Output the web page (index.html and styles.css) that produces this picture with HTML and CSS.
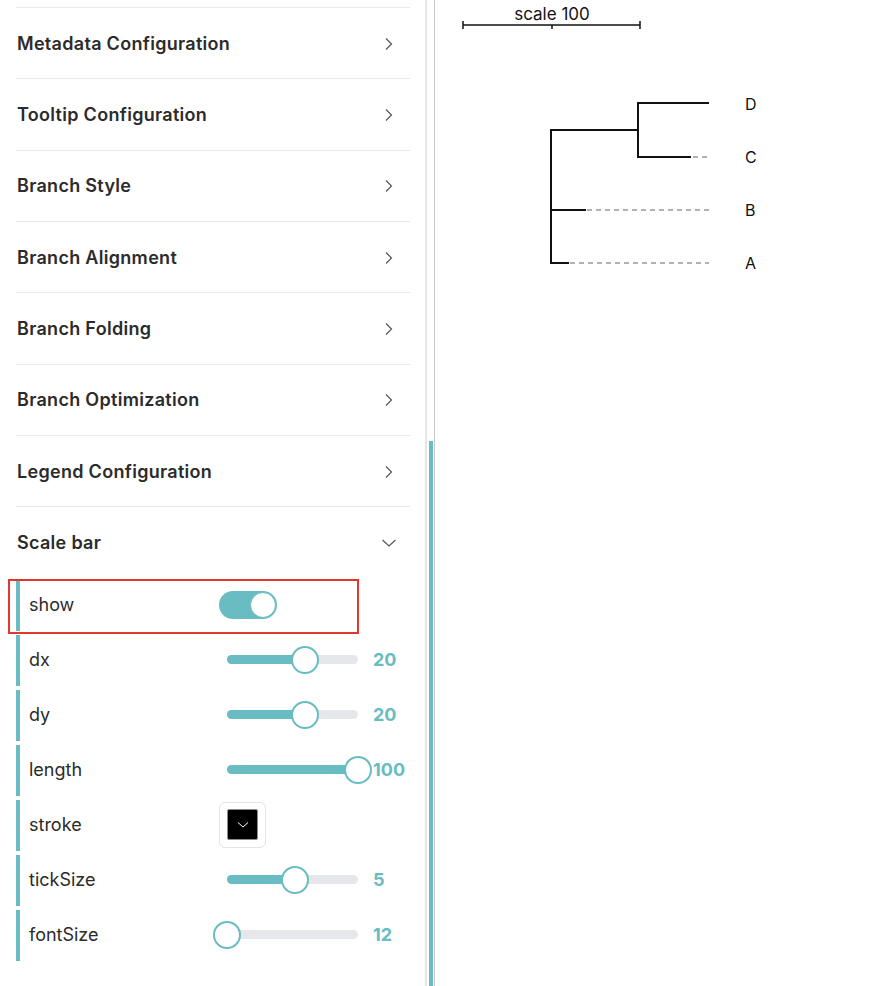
FILE: index.html
```html
<!DOCTYPE html>
<html>
<head>
<meta charset="utf-8">
<link rel="stylesheet" href="styles.css">
</head>
<body>
<div class="layout">
  <aside class="panel">
    <div class="top-sep"></div>
    <div class="section"><span class="title">Metadata Configuration</span><svg class="chev" width="10" height="14" viewBox="0 0 10 14"><path d="M2 1.5 L7.5 7 L2 12.5" fill="none" stroke="#555" stroke-width="1.2"/></svg></div>
    <div class="section"><span class="title">Tooltip Configuration</span><svg class="chev" width="10" height="14" viewBox="0 0 10 14"><path d="M2 1.5 L7.5 7 L2 12.5" fill="none" stroke="#555" stroke-width="1.2"/></svg></div>
    <div class="section"><span class="title">Branch Style</span><svg class="chev" width="10" height="14" viewBox="0 0 10 14"><path d="M2 1.5 L7.5 7 L2 12.5" fill="none" stroke="#555" stroke-width="1.2"/></svg></div>
    <div class="section"><span class="title">Branch Alignment</span><svg class="chev" width="10" height="14" viewBox="0 0 10 14"><path d="M2 1.5 L7.5 7 L2 12.5" fill="none" stroke="#555" stroke-width="1.2"/></svg></div>
    <div class="section"><span class="title">Branch Folding</span><svg class="chev" width="10" height="14" viewBox="0 0 10 14"><path d="M2 1.5 L7.5 7 L2 12.5" fill="none" stroke="#555" stroke-width="1.2"/></svg></div>
    <div class="section"><span class="title">Branch Optimization</span><svg class="chev" width="10" height="14" viewBox="0 0 10 14"><path d="M2 1.5 L7.5 7 L2 12.5" fill="none" stroke="#555" stroke-width="1.2"/></svg></div>
    <div class="section"><span class="title">Legend Configuration</span><svg class="chev" width="10" height="14" viewBox="0 0 10 14"><path d="M2 1.5 L7.5 7 L2 12.5" fill="none" stroke="#555" stroke-width="1.2"/></svg></div>
    <div class="section open"><span class="title">Scale bar</span><svg class="chev-down" width="16" height="10" viewBox="0 0 16 10"><path d="M1.5 2 L8 8 L14.5 2" fill="none" stroke="#555" stroke-width="1.2"/></svg></div>
    <div class="rows">
      <div class="row highlighted">
        <span class="label">show</span>
        <div class="toggle"><span class="knob"></span></div>
        <span class="highlight-box"></span>
      </div>
      <div class="row">
        <span class="label">dx</span>
        <div class="slider"><div class="track"><div class="fill" style="width:59.5%"></div><span class="thumb" style="left:59.5%"></span></div><span class="value">20</span></div>
      </div>
      <div class="row">
        <span class="label">dy</span>
        <div class="slider"><div class="track"><div class="fill" style="width:59.5%"></div><span class="thumb" style="left:59.5%"></span></div><span class="value">20</span></div>
      </div>
      <div class="row">
        <span class="label">length</span>
        <div class="slider"><div class="track"><div class="fill" style="width:100%"></div><span class="thumb" style="left:100%"></span></div><span class="value">100</span></div>
      </div>
      <div class="row">
        <span class="label">stroke</span>
        <div class="picker"><span class="swatch"><svg width="12" height="8" viewBox="0 0 12 8"><path d="M1 1.5 L6 6 L11 1.5" fill="none" stroke="#fff" stroke-width="1"/></svg></span></div>
      </div>
      <div class="row">
        <span class="label">tickSize</span>
        <div class="slider"><div class="track"><div class="fill" style="width:52%"></div><span class="thumb" style="left:52%"></span></div><span class="value">5</span></div>
      </div>
      <div class="row">
        <span class="label">fontSize</span>
        <div class="slider"><div class="track"><div class="fill" style="width:0%"></div><span class="thumb" style="left:0%"></span></div><span class="value">12</span></div>
      </div>
    </div>
  </aside>
  <div class="divider"></div>
  <div class="scrollbar"><div class="thumb-bar"></div></div>
  <main class="canvas">
    <svg class="tree" width="443" height="986" viewBox="0 0 443 986">
      <g stroke="#111" stroke-width="1.5" fill="none">
        <path d="M28 25 H205"/>
        <path d="M28 21 V29"/>
        <path d="M205 21 V29"/>
        <path d="M117 25 V29"/>
      </g>
      <text x="117" y="19.5" text-anchor="middle" class="svgtext">scale 100</text>
      <g stroke="#111" stroke-width="2" fill="none" stroke-linecap="square">
        <path d="M116 130 V263"/>
        <path d="M116 130 H203"/>
        <path d="M203 103 V157"/>
        <path d="M203 103 H273"/>
        <path d="M203 157 H255"/>
        <path d="M116 210 H150"/>
        <path d="M116 263 H133"/>
      </g>
      <g stroke="#999" stroke-width="1.3" stroke-dasharray="5 4" fill="none">
        <path d="M258 157 H274"/>
        <path d="M152 210 H274"/>
        <path d="M135 263 H274"/>
      </g>
      <g class="leaf">
        <text x="310" y="110">D</text>
        <text x="310" y="163">C</text>
        <text x="310" y="216">B</text>
        <text x="310" y="269">A</text>
      </g>
    </svg>
  </main>
</div>
</body>
</html>
```
FILE: styles.css
```css
* { box-sizing: border-box; }
html, body { margin: 0; padding: 0; background: #fff; }
body {
  font-family: Inter, "Noto Sans", "Liberation Sans", Arial, sans-serif;
  color: #2b2b2b;
  width: 878px;
  height: 986px;
  overflow: hidden;
}
.layout { display: flex; height: 986px; }
.panel {
  width: 425px;
  flex: none;
  padding: 0 15px 0 16px;
}
.top-sep { height: 8px; border-bottom: 1px solid #e8e9ee; }
.section {
  height: 71.33px;
  border-bottom: 1px solid #e8e9ee;
  display: flex;
  align-items: center;
  justify-content: space-between;
  padding: 0 16px 0 1px;
}
.section.open { border-bottom: none; padding-right: 13px; }
.title {
  font-size: 18px;
  font-weight: 600;
  letter-spacing: 0.3px;
  color: #2b2b2b;
}
.chev { display: block; margin-top: 1px; }
.chev-down { display: block; }
.rows {
  display: flex;
  flex-direction: column;
  gap: 4px;
  margin-top: 1px;
}
.row {
  position: relative;
  height: 51px;
  display: flex;
  align-items: center;
  border-left: 4px solid #69bcc1;
  padding-left: 9px;
  padding-bottom: 1px;
}
.label {
  width: 190px;
  font-size: 18px;
  color: #2b2b2b;
}
.toggle {
  width: 58px;
  height: 28px;
  border-radius: 14px;
  background: #69bcc1;
  position: relative;
}
.knob {
  position: absolute;
  right: 1px;
  top: 1px;
  width: 26px;
  height: 26px;
  border-radius: 50%;
  background: #fff;
  border: 1.5px solid #69bcc1;
}
.highlight-box {
  position: absolute;
  left: -12px;
  top: -1px;
  width: 351px;
  height: 55px;
  border: 2px solid #e3372c;
  pointer-events: none;
}
.slider {
  display: flex;
  align-items: center;
  padding-left: 8px;
}
.track {
  position: relative;
  width: 131px;
  height: 9px;
  border-radius: 5px;
  background: #e5e7eb;
}
.fill {
  height: 100%;
  border-radius: 5px;
  background: #69bcc1;
}
.thumb {
  position: absolute;
  top: 50%;
  width: 28px;
  height: 28px;
  margin-left: -14px;
  margin-top: -14px;
  border-radius: 50%;
  background: #fff;
  border: 2.5px solid #69bcc1;
}
.value {
  margin-left: 15px;
  font-size: 18px;
  font-weight: 700;
  color: #69bcc1;
}
.picker {
  width: 47px;
  height: 46px;
  border: 1.5px solid #e3e4e8;
  border-radius: 6px;
  display: flex;
  align-items: center;
  justify-content: center;
}
.swatch {
  width: 31px;
  height: 31px;
  background: #000;
  border: 1.5px solid #8a8a8a;
  border-radius: 2px;
  display: flex;
  align-items: center;
  justify-content: center;
}
.swatch svg { display: block; }
.divider { width: 2px; flex: none; background: #e6e6ea; }
.scrollbar {
  width: 8px;
  flex: none;
  position: relative;
  border-right: 1px solid #c9c9cc;
}
.thumb-bar {
  position: absolute;
  left: 2px;
  width: 4px;
  top: 441px;
  bottom: 0;
  background: #69bcc1;
}
.canvas { flex: 1; position: relative; }
.tree { display: block; }
.svgtext { font-family: Inter, "Liberation Sans", Arial, sans-serif; font-size: 17px; fill: #111; }
.leaf text { font-family: Inter, "Liberation Sans", Arial, sans-serif; font-size: 16px; fill: #111; }
```
